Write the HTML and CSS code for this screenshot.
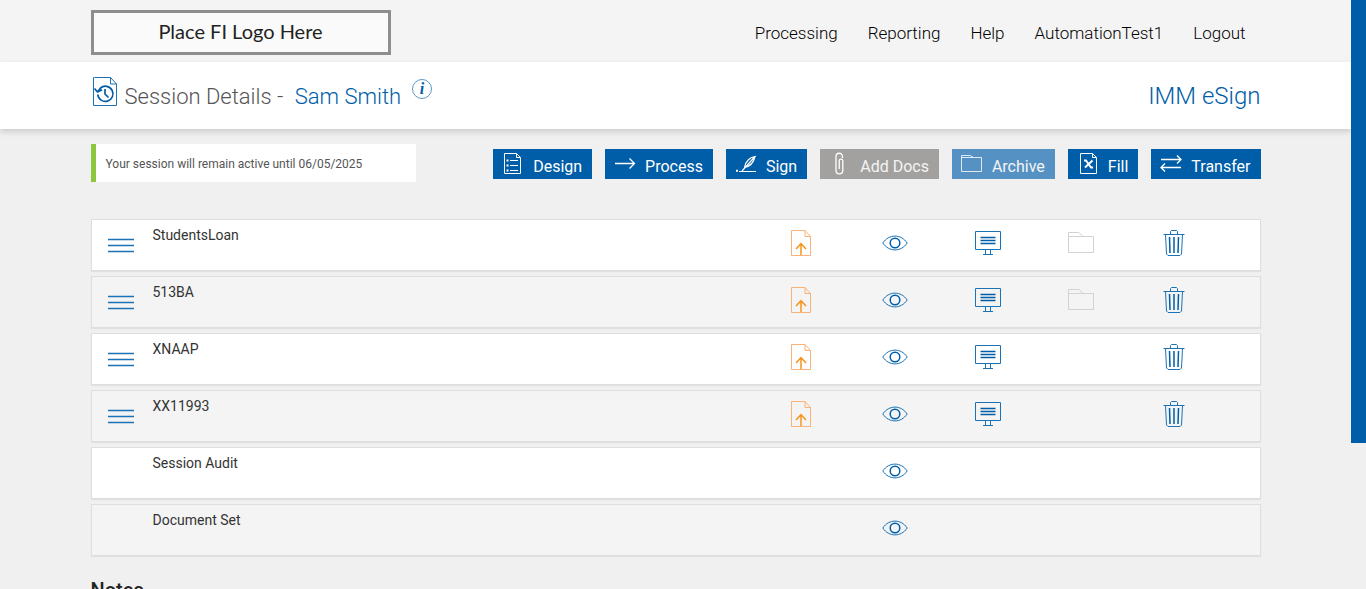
FILE: index.html
```html
<!DOCTYPE html>
<html lang="en">
<head>
<meta charset="utf-8">
<meta name="viewport" content="width=device-width, initial-scale=1">
<title>Session Details</title>
<link rel="stylesheet" href="styles.css">
</head>
<body>
<svg class="sprite" aria-hidden="true">
  <symbol id="i-upload" viewBox="0 0 28 28"><path d="M3.500 1.500H17L22.500 7.500V26.500H3.500Z" stroke="#f9b277"/><path d="M17 1.500V7.500H22.500" stroke="#f9b277"/><path d="M13 26V15M8 20L13 14.700L18 20" stroke="#f7941d" stroke-width="1.500"/></symbol>
  <symbol id="i-eye" viewBox="0 0 28 28"><path d="M1.800 14C8 4.800 20 4.800 26.200 14C20 23.200 8 23.200 1.800 14Z"/><circle cx="14" cy="14" r="4.800" stroke="#005da8" stroke-width="1.500"/></symbol>
  <symbol id="i-screen" viewBox="0 0 28 28"><path d="M1.500 2.500H26.500V20.500H1.500Z"/><path d="M6.500 8.500H21.500M6.500 11.500H21.500M6.500 14.500H21.500" stroke="#005da8" stroke-width="1.300"/><path d="M11.500 20.500V25M16.500 20.500V25M9 25.500H19"/></symbol>
  <symbol id="i-folder" viewBox="0 0 28 28"><path d="M1.500 23.500V3.500H12L16 7.500H26.500V23.500ZM1.500 7.500H16"/></symbol>
  <symbol id="i-trash" viewBox="0 0 28 28"><path d="M3.500 5.500H24.500M10.500 5.500V2.500L11.500 1.500H16.500L17.500 2.500V5.500M5.500 5.500L6.500 25L8 26.500H20L21.500 25L22.500 5.500"/><path d="M9.500 8L10 24M14 8V24M18.500 8L18 24" stroke="#005da8" stroke-width="1.500"/></symbol>
  <symbol id="i-menu" viewBox="0 0 26 18"><path d="M0 2.500H26M0 8.500H26M0 14.500H26" stroke-width="1.500"/></symbol>
</svg>

<div class="page">
  <header class="topbar">
    <div class="container topbar-inner">
      <div class="logo">Place FI Logo Here</div>
      <nav class="nav">
        <a href="#">Processing</a>
        <a href="#">Reporting</a>
        <a href="#">Help</a>
        <a href="#">AutomationTest1</a>
        <a href="#">Logout</a>
      </nav>
    </div>
  </header>

  <div class="titlebar">
    <div class="container titlebar-inner">
      <svg class="title-icon" viewBox="0 0 25 30"><path d="M1.500 .5H17.500L23.500 7V28.500H.5V.5ZM17.500 .5V7H23.500"/><path d="M4.800 17.500A7.600 7.600 0 1 0 7.500 11L4.500 15M1.500 11.500L4.500 15L9 12.700M12 12V17L15.500 20.500" stroke="#005da8" stroke-width="1.700"/></svg>
      <h1 class="title">Session Details - <span class="person">Sam Smith</span></h1>
      <button class="info" type="button" aria-label="Session information">i</button>
      <div class="product">IMM eSign</div>
    </div>
  </div>

  <main class="container">
    <div class="toolbar">
      <p class="notice">Your session will remain active until 06/05/2025</p>
      <div class="actions">
        <button class="btn" type="button"><svg class="btn-icon" viewBox="0 0 22 24"><path d="M1.500 1.500H13.500L17.500 5.500V21.500H1.500ZM13.500 1.500V5.500H17.500M7 8.500H15M7 13.500H15M7 18.500H15"/><path d="M3.500 8.500H5.500M3.500 13.500H5.500M3.500 18.500H5.500" stroke-width="2"/></svg>Design</button>
        <button class="btn" type="button"><svg class="btn-icon" viewBox="0 0 22 24"><path d="M0 11.500H19.500M14.500 6.500L19.500 11.500L14.500 16.500" stroke-width="1.300"/></svg>Process</button>
        <button class="btn" type="button"><svg class="btn-icon" viewBox="0 0 22 24"><path d="M0 18.800H2" stroke-width="2"/><path d="M3 19.500H20M6 19L19 4.500C14.500 5 9.500 9 8.500 15.500C14 14.500 17.500 11 19 4.500" stroke-width="1.200"/></svg>Sign</button>
        <button class="btn btn-muted" type="button"><svg class="btn-icon" viewBox="0 0 22 24"><path d="M12.500 6V4.500A3.200 3.200 0 0 0 6 4.500V18.500A3.400 3.400 0 0 0 12.800 18.500V9A1.800 1.800 0 0 0 9.200 9V17" stroke-width="1.300"/></svg>Add Docs</button>
        <button class="btn btn-soft" type="button"><svg class="btn-icon" viewBox="0 0 22 24"><path d="M-.5 19.500V3.500H8L11.500 5.500H19.500V19.500ZM-.5 5.500H11.500" stroke-opacity=".8"/></svg>Archive</button>
        <button class="btn" type="button"><svg class="btn-icon" viewBox="0 0 22 24"><path d="M2.500 1.500H14.500L18.500 5.500V21.500H2.500ZM14.500 1.500V5.500H18.500"/><path d="M6 8.500H8L13 15.500H15M14.500 8.500L7 15.500" stroke-width="2"/></svg>Fill</button>
        <button class="btn" type="button"><svg class="btn-icon" viewBox="0 0 22 24"><path d="M0 7.500H20M16 3.500L20 7.500L16 11.500M20 15.500H0M4 11.500L0 15.500L4 19.500" stroke-width="1.300"/></svg>Transfer</button>
      </div>
    </div>

    <ul class="docs">
      <li class="doc">
        <button class="icon-btn handle" type="button" aria-label="Reorder"><svg class="menu"><use href="#i-menu"/></svg></button>
        <span class="doc-name">StudentsLoan</span>
        <button class="icon-btn upload" type="button" aria-label="Upload"><svg class="icon"><use href="#i-upload"/></svg></button>
        <button class="icon-btn view" type="button" aria-label="View"><svg class="icon"><use href="#i-eye"/></svg></button>
        <button class="icon-btn present" type="button" aria-label="Present"><svg class="icon"><use href="#i-screen"/></svg></button>
        <button class="icon-btn archive" type="button" aria-label="Archive"><svg class="icon"><use href="#i-folder"/></svg></button>
        <button class="icon-btn remove" type="button" aria-label="Delete"><svg class="icon"><use href="#i-trash"/></svg></button>
      </li>
      <li class="doc">
        <button class="icon-btn handle" type="button" aria-label="Reorder"><svg class="menu"><use href="#i-menu"/></svg></button>
        <span class="doc-name">513BA</span>
        <button class="icon-btn upload" type="button" aria-label="Upload"><svg class="icon"><use href="#i-upload"/></svg></button>
        <button class="icon-btn view" type="button" aria-label="View"><svg class="icon"><use href="#i-eye"/></svg></button>
        <button class="icon-btn present" type="button" aria-label="Present"><svg class="icon"><use href="#i-screen"/></svg></button>
        <button class="icon-btn archive" type="button" aria-label="Archive"><svg class="icon"><use href="#i-folder"/></svg></button>
        <button class="icon-btn remove" type="button" aria-label="Delete"><svg class="icon"><use href="#i-trash"/></svg></button>
      </li>
      <li class="doc">
        <button class="icon-btn handle" type="button" aria-label="Reorder"><svg class="menu"><use href="#i-menu"/></svg></button>
        <span class="doc-name">XNAAP</span>
        <button class="icon-btn upload" type="button" aria-label="Upload"><svg class="icon"><use href="#i-upload"/></svg></button>
        <button class="icon-btn view" type="button" aria-label="View"><svg class="icon"><use href="#i-eye"/></svg></button>
        <button class="icon-btn present" type="button" aria-label="Present"><svg class="icon"><use href="#i-screen"/></svg></button>
        <button class="icon-btn remove" type="button" aria-label="Delete"><svg class="icon"><use href="#i-trash"/></svg></button>
      </li>
      <li class="doc">
        <button class="icon-btn handle" type="button" aria-label="Reorder"><svg class="menu"><use href="#i-menu"/></svg></button>
        <span class="doc-name">XX11993</span>
        <button class="icon-btn upload" type="button" aria-label="Upload"><svg class="icon"><use href="#i-upload"/></svg></button>
        <button class="icon-btn view" type="button" aria-label="View"><svg class="icon"><use href="#i-eye"/></svg></button>
        <button class="icon-btn present" type="button" aria-label="Present"><svg class="icon"><use href="#i-screen"/></svg></button>
        <button class="icon-btn remove" type="button" aria-label="Delete"><svg class="icon"><use href="#i-trash"/></svg></button>
      </li>
      <li class="doc">
        <span class="doc-name">Session Audit</span>
        <button class="icon-btn view" type="button" aria-label="View"><svg class="icon"><use href="#i-eye"/></svg></button>
      </li>
      <li class="doc">
        <span class="doc-name">Document Set</span>
        <button class="icon-btn view" type="button" aria-label="View"><svg class="icon"><use href="#i-eye"/></svg></button>
      </li>
    </ul>

    <h2 class="notes">Notes</h2>
  </main>
</div>
<div class="scroll-track"><div class="scroll-thumb"></div></div>
</body>
</html>
```

FILE: styles.css
```css
* {
  box-sizing: border-box;
}

body {
  display: flex;
  height: 100vh;
  margin: 0;
  overflow: hidden;
  background: #f0f0f0;
  color: #333;
  font-family: Roboto, "Liberation Sans", sans-serif;
  font-size: 14px;
}

button {
  padding: 0;
  border: 0;
  background: none;
  font-family: inherit;
  cursor: pointer;
}

svg {
  fill: none;
  stroke: #1b72b5;
}

.sprite {
  position: absolute;
  width: 0;
  height: 0;
}

.page {
  flex: 1;
  min-width: 0;
  overflow: hidden;
}

.scroll-track {
  flex: none;
  width: 15px;
}

.scroll-thumb {
  height: 75.2%;
  background: #005da8;
}

.container {
  width: 100%;
  max-width: 1170px;
  margin: 0 auto;
}

.topbar {
  background: #f4f4f4;
}

.topbar-inner {
  display: flex;
  align-items: center;
  justify-content: space-between;
  padding: 10px 15px 7px 0;
}

.logo {
  width: 300px;
  padding-bottom: 2px;
  border: 3px solid #8e8e8e;
  background: #fafafa;
  color: #222;
  font-family: Lato, sans-serif;
  font-size: 20px;
  line-height: 37px;
  text-align: center;
}

.nav {
  display: flex;
  gap: 30px;
}

.nav a {
  color: #000;
  font-size: 17px;
  font-weight: 300;
  line-height: 22px;
  text-decoration: none;
}

.titlebar {
  background: #fff;
  box-shadow: 0 3px 6px rgba(0, 0, 0, 0.15);
}

.titlebar-inner {
  display: flex;
  align-items: flex-start;
  padding: 15px 0 16px;
}

.title-icon {
  width: 25px;
  height: 30px;
  margin: 0 7px 0 2px;
}

.title {
  margin: 0;
  padding-top: 4px;
  color: #555;
  font-size: 22px;
  font-weight: 300;
  line-height: 32px;
}

.person {
  margin-left: 6px;
  color: #005da8;
}

.info {
  width: 20px;
  height: 20px;
  margin: 2px 0 0 11px;
  border: 1px solid #5f97c4;
  border-radius: 50%;
  color: #005da8;
  font-family: "Liberation Serif", serif;
  font-size: 16px;
  font-style: italic;
  font-weight: 700;
  line-height: 18px;
}

.product {
  margin-left: auto;
  padding-top: 4px;
  color: #005da8;
  font-size: 24px;
  font-weight: 300;
  line-height: 30px;
}

.toolbar {
  display: flex;
  align-items: center;
  justify-content: space-between;
  padding-top: 15px;
}

.notice {
  width: 325px;
  margin: 0;
  padding: 2px 0 0 10px;
  border-left: 5px solid #8dc63f;
  background: #fff;
  color: #555;
  font-size: 12px;
  line-height: 36px;
}

.actions {
  display: flex;
  gap: 13px;
  padding-top: 2px;
}

.btn {
  display: flex;
  gap: 8px;
  height: 30px;
  padding: 0 10px;
  background: #005da8;
  color: #fff;
  font-size: 16px;
  line-height: 35px;
}

.btn-muted {
  background: #a3a19f;
}

.btn-soft {
  background: #5591c2;
}

.btn-soft,
.btn-muted {
  color: #f4f4f4;
}

.btn-icon {
  width: 22px;
  height: 24px;
  margin-top: 3px;
  overflow: visible;
  stroke: #fff;
}

.docs {
  display: grid;
  gap: 5px;
  margin: 37px 0 0;
  padding: 0;
  list-style: none;
}

.doc {
  display: grid;
  grid-template-columns: 58px 1fr repeat(5, 93px);
  height: 52px;
  padding-right: 39px;
  border: 1px solid #dedede;
  background: #fff;
  box-shadow: 0 1px 1px rgba(0, 0, 0, 0.06);
}

.doc:nth-child(even) {
  background: #f4f4f4;
}

.doc-name {
  grid-column: 2;
  padding: 5px 0 0 3px;
  line-height: 20px;
}

.icon-btn {
  display: flex;
  justify-content: center;
  padding-top: 9px;
}

.handle {
  grid-column: 1;
  padding-top: 17px;
}

.upload {
  grid-column: 3;
}

.view {
  grid-column: 4;
}

.present {
  grid-column: 5;
}

.archive {
  grid-column: 6;
}

.archive svg {
  stroke: #d3d1d1;
}

.remove {
  grid-column: 7;
}

.icon {
  width: 28px;
  height: 28px;
}

.menu {
  width: 26px;
  height: 18px;
}

.notes {
  margin: 20px 0 0;
  color: #222;
  font-size: 20px;
  font-weight: 500;
  line-height: 28px;
}
```
